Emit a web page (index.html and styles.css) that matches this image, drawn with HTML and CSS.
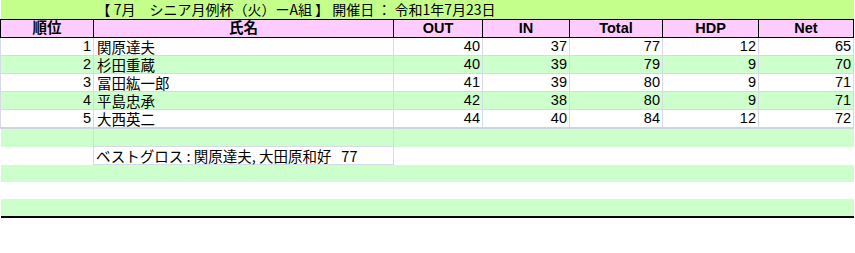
FILE: index.html
```html
<!DOCTYPE html>
<html lang="ja">
<head>
<meta charset="utf-8">
<link rel="stylesheet" href="styles.css">
</head>
<body>
<table class="sheet">
  <colgroup>
    <col class="c-rank"><col class="c-name"><col class="c-out"><col class="c-in"><col class="c-total"><col class="c-hdp"><col class="c-net">
  </colgroup>
  <tr class="title">
    <td></td>
    <td colspan="6"><span class="title-text">【 7月　シニア月例杯（火）ーA組 】 開催日 ： 令和1年7月23日</span></td>
  </tr>
  <tr class="head">
    <th>順位</th><th>氏名</th><th>OUT</th><th>IN</th><th>Total</th><th>HDP</th><th>Net</th>
  </tr>
  <tr class="row odd"><td class="num">1</td><td class="name">関原達夫</td><td class="num">40</td><td class="num">37</td><td class="num">77</td><td class="num">12</td><td class="num">65</td></tr>
  <tr class="row even"><td class="num">2</td><td class="name">杉田重蔵</td><td class="num">40</td><td class="num">39</td><td class="num">79</td><td class="num">9</td><td class="num">70</td></tr>
  <tr class="row odd"><td class="num">3</td><td class="name">冨田紘一郎</td><td class="num">41</td><td class="num">39</td><td class="num">80</td><td class="num">9</td><td class="num">71</td></tr>
  <tr class="row even"><td class="num">4</td><td class="name">平島忠承</td><td class="num">42</td><td class="num">38</td><td class="num">80</td><td class="num">9</td><td class="num">71</td></tr>
  <tr class="row odd last"><td class="num">5</td><td class="name">大西英二</td><td class="num">44</td><td class="num">40</td><td class="num">84</td><td class="num">12</td><td class="num">72</td></tr>
  <tr class="extra even"><td></td><td class="boxed"></td><td colspan="5"></td></tr>
  <tr class="extra odd"><td></td><td class="boxed best">ベストグロス : 関原達夫, 大田原和好&nbsp;&nbsp; 77</td><td colspan="5"></td></tr>
  <tr class="blank even"><td colspan="7"></td></tr>
  <tr class="blank odd"><td colspan="7"></td></tr>
  <tr class="blank even end"><td colspan="7"></td></tr>
</table>
</body>
</html>
```
FILE: styles.css
```css
html, body {
  margin: 0;
  padding: 0;
  background: #ffffff;
}

.sheet {
  border-collapse: collapse;
  table-layout: fixed;
  width: 853px;
  font-family: "Liberation Sans", "Noto Sans CJK JP", sans-serif;
  font-size: 14.5px;
  color: #000;
}

.c-rank { width: 93px; }
.c-name { width: 300px; }
.c-out { width: 89px; }
.c-in { width: 87px; }
.c-total { width: 93px; }
.c-hdp { width: 96px; }
.c-net { width: 95px; }

.sheet td, .sheet th {
  padding: 0;
  height: 17px;
  line-height: 17px;
  white-space: nowrap;
  overflow: visible;
}

.title td {
  background: #c4ff8c;
  border-bottom: 1px solid #000;
  height: 18px;
  line-height: 18px;
}
.title-text {
  padding-left: 3px;
  font-family: "Noto Sans CJK JP", sans-serif;
  font-size: 14px;
  line-height: 18px;
}

.head th {
  background: #ffccff;
  border: 1px solid #000;
  font-weight: bold;
  text-align: center;
  font-size: 14.5px;
  font-family: "Liberation Sans", "Noto Sans CJK JP", sans-serif;
}

.row td {
  border: 1px solid #d6dae6;
  border-top: none;
}
.row.last td {
  border-bottom: 2px solid #d0d4e0;
}

.odd td { background: #ffffff; }
.even td { background: #ccffcc; }

.num {
  text-align: right;
  padding-right: 2px !important;
}
.name {
  text-align: left;
  padding-left: 3px !important;
  font-family: "Noto Sans CJK JP", sans-serif;
}

.extra td.boxed {
  border-left: 1px solid #d6dae6;
  border-right: 1px solid #d6dae6;
}
.extra td.best {
  border-top: 1px solid #d6dae6;
  border-bottom: 1px solid #d6dae6;
  padding-left: 2px;
  font-family: "Noto Sans CJK JP", sans-serif;
}

.blank td {
  height: 17px;
}
.end td {
  border-bottom: 2px solid #000;
}
```
